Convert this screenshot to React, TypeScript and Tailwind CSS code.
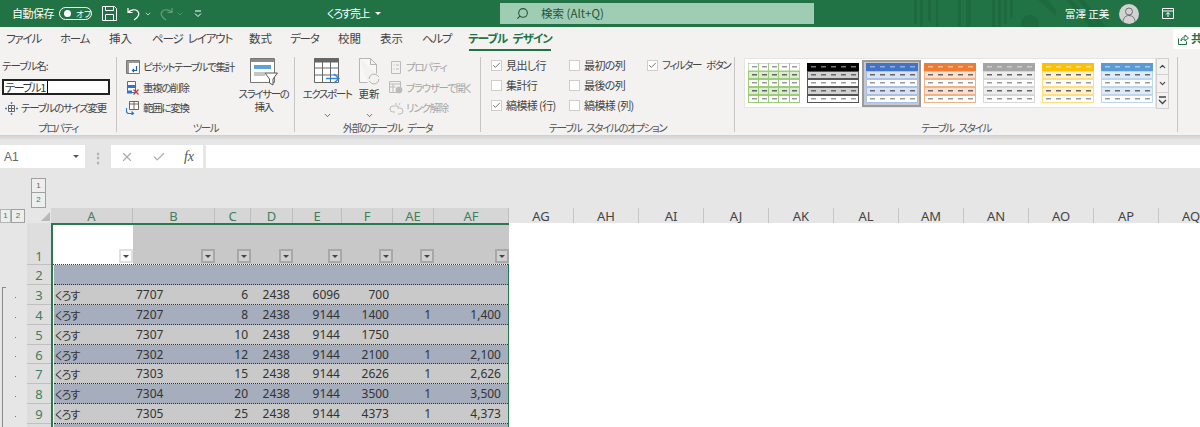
import { ChevronDown, ChevronUp, Search, Check, X } from "lucide-react";

const jp = "font-['Noto_Sans_CJK_JP','Noto_Sans',sans-serif] [font-feature-settings:'palt']";

const columns = [
  ["A", 82], ["B", 82], ["C", 36], ["D", 42], ["E", 49], ["F", 51], ["AE", 41], ["AF", 75],
] as const;

const moreColumns = ["AG", "AH", "AI", "AJ", "AK", "AL", "AM", "AN", "AO", "AP", "AQ"];

const rows = [
  { n: 3, h: "h-[20px]", b: "7707", c: "6", d: "2438", e: "6096", f: "700", ae: "", af: "" },
  { n: 4, h: "h-[20px]", b: "7207", c: "8", d: "2438", e: "9144", f: "1400", ae: "1", af: "1,400" },
  { n: 5, h: "h-[20px]", b: "7307", c: "10", d: "2438", e: "9144", f: "1750", ae: "", af: "" },
  { n: 6, h: "h-[19px]", b: "7302", c: "12", d: "2438", e: "9144", f: "2100", ae: "1", af: "2,100" },
  { n: 7, h: "h-[20px]", b: "7303", c: "15", d: "2438", e: "9144", f: "2626", ae: "1", af: "2,626" },
  { n: 8, h: "h-[20px]", b: "7304", c: "20", d: "2438", e: "9144", f: "3500", ae: "1", af: "3,500" },
  { n: 9, h: "h-[20px]", b: "7305", c: "25", d: "2438", e: "9144", f: "4373", ae: "1", af: "4,373" },
];

function Swatch({ head, line, band, dash = "#9a9a9a", headDash = "#ffffff99", cells }: { head: string; line: string; band: string; dash?: string; headDash?: string; cells?: boolean }) {
  const xs = [4, 14, 24, 34, 44];
  return (
    <svg width="52" height="40" viewBox="0 0 52 40" className="shrink-0">
      <rect x="0" y="0" width="52" height="8" fill={head} stroke={cells ? line : "none"} />
      {[8, 16, 24, 32].map((y, i) => (
        <rect key={y} x="0.5" y={y + 0.5} width="51" height="7" fill={i % 2 === 0 ? band : "#ffffff"} stroke={line} />
      ))}
      {cells && [10.5, 20.5, 30.5, 41.5].map((x) => <path key={x} d={`M${x} 0v40`} stroke={line} />)}
      {xs.map((x) => (
        <g key={x}>
          <rect x={x} y="3" width="5" height="1.5" fill={headDash} />
          {[11, 19, 27, 35].map((y, i) => (
            <rect key={y} x={x} y={y} width="5" height="1.5" fill={i % 2 === 0 ? "#666666" : dash} />
          ))}
        </g>
      ))}
    </svg>
  );
}

function Group({ label, width, children }: { label: string; width: string; children: React.ReactNode }) {
  return (
    <div className={`${width} flex h-full shrink-0 flex-col border-r border-[#c8c6c4]`}>
      <div className="flex-1">{children}</div>
      <div className="-mb-[3px] text-center text-[10.5px] leading-[14px] tracking-[-1.4px] text-[#555] [word-spacing:4px]">{label}</div>
    </div>
  );
}

function Option({ label, checked, narrow }: { label: string; checked?: boolean; narrow?: boolean }) {
  return (
    <div className="flex h-[20px] items-center gap-[4px] whitespace-nowrap">
      <span className="flex size-[11px] shrink-0 items-center justify-center border border-[#d0cecc] bg-white">
        {checked && <Check size={9} strokeWidth={2} className="text-[#444]" />}
      </span>
      <span className={narrow ? "text-[10.5px] tracking-[-1.4px] [word-spacing:4px]" : "tracking-[-0.6px]"}>{label}</span>
    </div>
  );
}

function FilterButton({ white }: { white?: boolean }) {
  return (
    <span className={`flex size-[14px] items-center justify-center border-2 ${white ? "border-[#e0e0e0] bg-white" : "border-[#a8a8a8] bg-[#d0d0d0]"}`}>
      <span className="h-0 w-0 border-x-[3px] border-t-[3px] border-x-transparent border-t-[#444]" />
    </span>
  );
}

function SmallLine({ icon, label, disabled }: { icon: React.ReactNode; label: string; disabled?: boolean }) {
  return (
    <div className={`flex h-[20.5px] items-center gap-[2px] whitespace-nowrap text-[10.5px] tracking-[-1.3px] ${disabled ? "text-[#a6a6a6]" : ""}`}>
      <span className="flex w-[16px] justify-center">{icon}</span>
      <span>{label}</span>
    </div>
  );
}

export default function App() {
  return (
    <div className={`${jp} h-[427px] w-[1200px] overflow-hidden bg-white text-[#444]`}>
      {/* title bar */}
      <div className="relative flex h-[27px] items-center bg-[#217346] text-[11px] text-white">
        <svg className="absolute left-[912px] top-0" width="200" height="27" viewBox="0 0 200 27">
          <g fill="#1d6a3f">
            <rect x="2" y="0" width="3" height="24" />
            <rect x="8" y="0" width="3" height="27" />
            <rect x="16" y="0" width="3" height="22" />
            <rect x="24" y="0" width="2" height="27" />
            <rect x="46" y="0" width="3" height="27" />
            <rect x="54" y="0" width="5" height="27" />
            <rect x="80" y="0" width="3" height="27" />
            <rect x="86" y="0" width="3" height="27" />
            <rect x="92" y="0" width="3" height="24" />
            <rect x="98" y="0" width="3" height="18" />
            <path d="M126 0h10l8 10v6zM154 0h6l26 27h-8zM166 0h6l22 27h-8z" />
            <circle cx="118" cy="24" r="9" />
          </g>
        </svg>
        <span className="ml-[12px] w-[46px] shrink-0 whitespace-nowrap tracking-[-0.5px]">自動保存</span>
        <span className="ml-[1px] flex h-[13px] w-[33px] shrink-0 items-center rounded-full border border-white pl-[4px] text-[8.5px]">
          <span className="size-[7px] shrink-0 rounded-full bg-white" />
          <span className="ml-[5px] whitespace-nowrap leading-none">オフ</span>
        </span>
        <svg className="ml-[10px] shrink-0" width="15" height="15" viewBox="0 0 15 15" fill="none" stroke="#fff">
          <path d="M.5.5h12l2 2v12H.5zM3.500.5v4h8v-4M3.500 14.5v-6h8v6" />
        </svg>
        <svg className="ml-[10px] shrink-0" width="14" height="14" viewBox="0 0 14 14" fill="none" stroke="#fff" strokeWidth="1.2">
          <path d="M1 1v4.500h4.500M1.500 5C4 2.500 8 2 10.500 4c2.500 2.500 1.500 6-3.500 9" />
        </svg>
        <ChevronDown size={8} className="ml-[3px] shrink-0" />
        <svg className="ml-[7px] shrink-0 opacity-30" width="14" height="14" viewBox="0 0 14 14" fill="none" stroke="#fff" strokeWidth="1.2">
          <path d="M13 1v4.500H8.500M12.500 5C10 2.500 6 2 3.500 4c-2.500 2.500-1.500 6 3.500 9" />
        </svg>
        <ChevronDown size={8} className="ml-[3px] shrink-0 opacity-30" />
        <svg className="ml-[10px] shrink-0" width="8" height="8" viewBox="0 0 8 8" fill="none" stroke="#fff">
          <path d="M1 1h6M1 3.500l3 3 3-3" />
        </svg>
        <span className="ml-[125px] w-[42px] shrink-0 whitespace-nowrap tracking-[-1.4px]">くろす売上</span>
        <span className="ml-[6px] h-0 w-0 shrink-0 border-x-[3px] border-t-[3px] border-x-transparent border-t-white" />
        <div className="relative ml-[119px] flex h-[21px] w-[314px] shrink-0 items-center bg-[#9fcdb3] text-[#26543a]">
          <Search size={13} className="ml-[16px] -scale-x-100" />
          <span className="ml-[12px] text-[11.5px]">検索 (Alt+Q)</span>
        </div>
        <span className="relative ml-[251px] w-[44px] shrink-0 whitespace-nowrap text-[10.5px]">富澤 正美</span>
        <span className="relative ml-[10px] flex size-[20px] shrink-0 items-center justify-center overflow-hidden rounded-full bg-[#d2d2d2]">
          <svg width="16" height="16" viewBox="0 0 16 16" fill="none" stroke="#6e6e6e">
            <circle cx="8" cy="5.5" r="3.5" />
            <path d="M2 16c0-4 2.500-6.500 6-6.500s6 2.500 6 6.500" />
          </svg>
        </span>
        <svg className="relative ml-[23px] shrink-0" width="12" height="11" viewBox="0 0 12 11" fill="none" stroke="#fff">
          <path d="M.5.5h11v10H.5zM.5 3h11" />
          <path d="M6 9V4.500M4 6.500l2-2 2 2" />
        </svg>
      </div>

      {/* tabs */}
      <div className="flex h-[24px] items-center bg-[#f3f2f1] pl-[6px] text-[11.5px] tracking-[-1.2px] text-[#444] [word-spacing:4px]">
        <span className="w-[54px] shrink-0 whitespace-nowrap">ファイル</span>
        <span className="w-[49px] shrink-0 whitespace-nowrap">ホーム</span>
        <span className="w-[43px] shrink-0 whitespace-nowrap tracking-normal">挿入</span>
        <span className="w-[97px] shrink-0 whitespace-nowrap">ページ レイアウト</span>
        <span className="w-[41px] shrink-0 whitespace-nowrap tracking-normal">数式</span>
        <span className="w-[48px] shrink-0 whitespace-nowrap">データ</span>
        <span className="w-[42px] shrink-0 whitespace-nowrap tracking-normal">校閲</span>
        <span className="w-[42px] shrink-0 whitespace-nowrap tracking-normal">表示</span>
        <span className="w-[47px] shrink-0 whitespace-nowrap">ヘルプ</span>
        <span className="flex h-full w-[82px] shrink-0 flex-col items-center justify-center whitespace-nowrap border-b-[2px] border-[#217346] pt-[2px] font-bold tracking-[-1px] text-[#217346]">テーブル デザイン</span>
        <span className="ml-auto flex h-[20px] w-[27px] items-center gap-[2px] overflow-hidden rounded-l-[2px] bg-white pl-[5px] font-bold text-[#217346]">
          <svg width="11" height="11" viewBox="0 0 11 11" fill="none" stroke="#217346" className="shrink-0">
            <path d="M.5 4.500v6h8v-3M3 7c0-3 2-4 4-4V1l3.500 3L7 7V5C5 5 4 5.500 3 7z" />
          </svg>
          共
        </span>
      </div>

      {/* ribbon */}
      <div className="flex h-[84px] items-stretch bg-[#f3f2f1] pb-[3px] pt-[6px] text-[11px] leading-none text-[#444]">
        <Group label="プロパティ" width="w-[117px]">
          <div className="pl-[2px] pt-[2px] text-[10.5px] leading-[14px] tracking-[-1px]">テーブル名:</div>
          <div className="ml-[2px] mt-[6px] flex h-[16px] w-[108px] items-center border-2 border-[#222] bg-white pl-[1px] text-[11px] tracking-[-1.2px] text-[#333]">テーブル1<span className="ml-[2px] h-[13px] w-px bg-black" /></div>
          <div className="mt-[3px] pl-[3px]">
            <SmallLine
              label="テーブルのサイズ変更"
              icon={
                <svg width="13" height="13" viewBox="0 0 13 13" fill="none" stroke="#666">
                  <path d="M3.500 3.500h6v6h-6zM6.500 3.500v6M3.500 6.500h6" />
                  <path d="M6.500 0v2M6.500 11v2M0 6.500h2M11 6.500h2" stroke="#2b88d8" strokeWidth="1.4" />
                </svg>
              }
            />
          </div>
        </Group>

        <Group label="ツール" width="w-[178px]">
          <div className="flex pl-[8px]">
            <div className="w-[113px] shrink-0">
              <SmallLine
                label="ピボットテーブルで集計"
                icon={
                  <svg width="14" height="14" viewBox="0 0 14 14" fill="none" stroke="#777">
                    <path d="M.5.5h13v13H.5z" fill="#fff" />
                    <path d="M1 1h12v2H1zM1 1h2v12H1z" fill="#999" stroke="none" />
                    <path d="M10.500 6v4.500H6.500M8 9l-1.500 1.500L8 12" stroke="#1f5fa8" strokeWidth="1.2" />
                  </svg>
                }
              />
              <SmallLine
                label="重複の削除"
                icon={
                  <svg width="14" height="14" viewBox="0 0 14 14">
                    <path d="M1.500.5h8v11h-8z" fill="#fff" stroke="#2b78c5" />
                    <rect x="1" y="4" width="9" height="3" fill="#2b78c5" />
                    <rect x="1" y="9.5" width="5" height="3" fill="#2b78c5" />
                    <path d="M7.500 8.500l5 5M12.500 8.500l-5 5" stroke="#d13438" strokeWidth="1.3" />
                  </svg>
                }
              />
              <SmallLine
                label="範囲に変換"
                icon={
                  <svg width="14" height="14" viewBox="0 0 14 14" fill="none" stroke="#666">
                    <path d="M3.500.5h9v8h-9z" fill="#fff" />
                    <path d="M3.500 3h9M8 .5v8" />
                    <path d="M7 12.500H3c-1.500 0-2.500-1-2.500-2.500V7M5.500 10.500l2 2-2 1.500" stroke="#2b78c5" strokeWidth="1.2" />
                  </svg>
                }
              />
            </div>
            <div className="flex w-[51px] shrink-0 flex-col items-center pt-[1px] text-center text-[10.5px] leading-[13px] tracking-[-1.4px]">
              <svg width="28" height="28" viewBox="0 0 28 28" fill="none">
                <path d="M.5.5h24v24H.5z" fill="#fff" stroke="#777" />
                <rect x="1" y="1" width="23" height="3" fill="#8a8a8a" />
                <rect x="4" y="7" width="17" height="4" fill="#5ba3dc" />
                <rect x="4" y="14" width="11" height="4" fill="#c8c6c4" />
                <path d="M15 15h12.500l-4.500 6v6l-3.500-2v-4z" fill="#fff" stroke="#555" />
              </svg>
              <div className="mt-[1px] whitespace-nowrap">スライサーの</div>
              <div>挿入</div>
            </div>
          </div>
        </Group>

        <Group label="外部のテーブル データ" width="w-[186px]">
          <div className="flex">
            <div className="ml-[7px] flex w-[50px] shrink-0 flex-col items-center pt-[1px] text-[10.5px] leading-[13px] tracking-[-1.4px]">
              <svg width="26" height="28" viewBox="0 0 26 28" fill="none" stroke="#666">
                <path d="M.5.5h24v24H.5z" fill="#fff" />
                <rect x="1" y="1" width="23" height="3" fill="#666" />
                <path d="M.5 10h24M.5 17h24M8.500 4v21M16.500 4v21" />
                <path d="M12 20.500h13M20 16l5 4.500-5 4.500" stroke="#2b88d8" strokeWidth="1.4" />
              </svg>
              <div className="mt-[1px] whitespace-nowrap">エクスポート</div>
              <ChevronDown size={9} className="mt-[11px]" />
            </div>
            <div className="flex w-[34px] shrink-0 flex-col items-center pt-[1px] text-[10.5px] leading-[13px]">
              <svg width="24" height="28" viewBox="0 0 24 28" fill="none" stroke="#b5b5b5">
                <path d="M2.500.5h11l6 6v9M2.500.5v24h8M13.500.5v6h6" fill="#f7f7f7" />
                <path d="M12 21a5 5 0 0 1 8.500-3.500l1.500 1.500M22 21a5 5 0 0 1-8.500 3.500L12 23" />
              </svg>
              <div className="mt-[1px]">更新</div>
              <ChevronDown size={9} className="mt-[11px]" />
            </div>
            <div className="ml-[2px]">
              <SmallLine disabled label="プロパティ" icon={<svg width="10" height="13" viewBox="0 0 10 13" fill="none" stroke="#bbb"><path d="M.5.5h9v12h-9zM2.500 4h1M5 4h3M2.500 8h1M5 8h3" /></svg>} />
              <SmallLine disabled label="ブラウザーで開く" icon={<svg width="14" height="13" viewBox="0 0 14 13" fill="none" stroke="#bbb"><path d="M.5.5h11v11H.5zM.5 3h11M.5 6h6M4 3v8" /><circle cx="10" cy="9" r="3" fill="#bbb" /></svg>} />
              <SmallLine disabled label="リンク解除" icon={<svg width="15" height="13" viewBox="0 0 15 13" fill="none" stroke="#bbb"><path d="M6 10H4a3 3 0 0 1 0-6h4a3 3 0 0 1 2 1M8 6h3a3 3 0 0 1 0 6H9M7 1v2M11 1l-1 2" /></svg>} />
            </div>
          </div>
        </Group>

        <Group label="テーブル スタイルのオプション" width="w-[254px]">
          <div className="-mt-[2px] flex pl-[10px]">
            <div className="w-[78px] shrink-0">
              <Option label="見出し行" checked />
              <Option label="集計行" />
              <Option label="縞模様 (行)" checked />
            </div>
            <div className="w-[78px] shrink-0">
              <Option label="最初の列" />
              <Option label="最後の列" />
              <Option label="縞模様 (列)" />
            </div>
            <Option label="フィルター ボタン" checked narrow />
          </div>
        </Group>

        <Group label="テーブル スタイル" width="w-[443px]">
          <div className="flex pl-[9px] pt-[1px]">
            <div className="flex h-[50px] w-[412px] items-center gap-[7px] border border-[#e4e4e4] bg-white pl-[3px]">
              <Swatch head="#ffffff" line="#9ccb7c" band="#dcedcf" dash="#9a9a9a" headDash="#9a9a9a" cells />
              <Swatch head="#000000" line="#555555" band="#d0d0d0" headDash="#777777" />
              <div className="mx-[-4px] flex h-[47px] w-[59px] items-center justify-center border-2 border-[#9a9a9a] bg-[#c8c8c8]">
                <Swatch head="#4472c4" line="#a9c0e8" band="#d9e2f3" headDash="#8faee0" />
              </div>
              <Swatch head="#ed7d31" line="#f4b183" band="#fbe0d0" headDash="#f7b98e" />
              <Swatch head="#a5a5a5" line="#d6d6d6" band="#ededed" headDash="#cccccc" />
              <Swatch head="#ffc000" line="#ffdd80" band="#fff2cc" headDash="#ffe08a" />
              <Swatch head="#5b9bd5" line="#bcd6ee" band="#deebf7" headDash="#a8cbea" />
            </div>
            <div className="flex w-[13px] flex-col">
              <span className="flex h-[17px] items-center justify-center border border-[#d0d0d0]"><ChevronUp size={9} strokeWidth={3} /></span>
              <span className="flex h-[17px] items-center justify-center border-x border-[#d0d0d0]"><ChevronDown size={9} strokeWidth={3} /></span>
              <span className="flex h-[17px] items-center justify-center border border-[#d0d0d0]"><svg width="9" height="9" viewBox="0 0 9 9" fill="none" stroke="#444" strokeWidth="1.3"><path d="M1 1h7M1 4l3.500 3.500L8 4" /></svg></span>
            </div>
          </div>
        </Group>
      </div>

      {/* ribbon shadow */}
      <div className="h-[5px] bg-gradient-to-b from-[#cfcfcf] to-[#e6e6e6]" />

      {/* formula bar */}
      <div className="flex h-[29px] items-start bg-[#e6e6e6] pt-[5px]">
        <div className="flex h-[23px] w-[85px] items-center justify-between bg-white pl-[4px] pr-[6px] font-['Liberation_Sans',sans-serif] text-[12px] text-[#666]">
          A1
          <span className="h-0 w-0 border-x-[3px] border-t-[3px] border-x-transparent border-t-[#555]" />
        </div>
        <div className="flex h-[23px] w-[26px] items-center justify-center">
          <span className="text-[12px] font-bold leading-none text-[#aaa]">⋮</span>
        </div>
        <div className="flex h-[23px] w-[92px] items-center justify-between bg-white px-[9px] text-[#aaa]">
          <X size={14} />
          <Check size={14} />
          <span className="font-['Liberation_Serif',serif] text-[14px] italic text-[#555]">fx</span>
        </div>
        <div className="ml-[3px] h-[23px] flex-1 bg-white" />
      </div>

      {/* outline level row */}
      <div className="flex h-[39px] bg-[#e6e6e6] pl-[31px] pt-[9px]">
        <div className="flex w-[15px] flex-col font-['Liberation_Sans',sans-serif] text-[8px] text-[#666]">
          <span className="flex h-[15px] items-center justify-center border border-[#a0a0a0] bg-[#eeeeee]">1</span>
          <span className="flex h-[15px] items-center justify-center border border-t-0 border-[#a0a0a0] bg-[#eeeeee]">2</span>
        </div>
      </div>

      {/* sheet */}
      <div className="flex font-['Noto_Sans',sans-serif] text-[12px]">
        {/* outline gutter */}
        <div className="flex w-[27px] shrink-0 flex-col bg-[#e6e6e6]">
          <div className="flex h-[15px] pt-px font-['Liberation_Sans',sans-serif] text-[8px] text-[#666]">
            <span className="flex h-[14px] w-[11px] items-center justify-center border border-[#b5b5b5] bg-[#eee]">1</span>
            <span className="flex h-[14px] w-[14px] items-center justify-center border border-[#a0a0a0] bg-[#eee]">2</span>
          </div>
          <div className="h-[64px]" />
          <div className="relative flex-1">
            <div className="absolute left-[2px] top-0 h-full w-[4px] border-l border-t border-[#8a8a8a]" />
            <div className="flex flex-col">
              {rows.map((r) => (
                <div key={r.n} className={`${r.h} flex items-center pl-[15px]`}>
                  <span className="size-[1px] bg-[#777]" />
                </div>
              ))}
            </div>
          </div>
        </div>

        {/* row headers */}
        <div className="flex w-[24px] shrink-0 flex-col bg-[#dedede] text-[13px] text-[#3f7f5f]">
          <div className="relative h-[15px] bg-[#e6e6e6]">
            <span className="absolute bottom-[2px] right-[1px] h-0 w-0 border-b-[9px] border-l-[9px] border-b-[#b8b8b8] border-l-transparent" />
          </div>
          <div className="flex h-[42px] items-end justify-center border-b border-[#c0c0c0] leading-[15px]">1</div>
          <div className="flex h-[20px] items-center justify-center border-b border-[#c0c0c0] pt-[3px]">2</div>
          {rows.map((r) => (
            <div key={r.n} className={`${r.h} flex items-center justify-center border-b border-[#c0c0c0] pt-[3px]`}>{r.n}</div>
          ))}
          <div className="h-[5px]" />
        </div>

        <div className="flex flex-col">
          {/* column headers */}
          <div className="flex h-[15px] text-[13px] leading-[17px]">
            {columns.map(([name, w]) => (
              <div key={name} style={{ width: w }} className="shrink-0 border-r border-[#bdbdbd] bg-[#d6d6d6] text-center text-[#3f7f5f]">{name}</div>
            ))}
            {moreColumns.map((name) => (
              <div key={name} className="w-[65px] shrink-0 border-r border-[#c6c6c6] bg-[#e6e6e6] text-center text-[#444]">{name}</div>
            ))}
          </div>

          {/* table */}
          <div className="w-[458px] border-x-2 border-t-2 border-[#2a7a50] border-r-[1px] bg-white text-[#333]">
            <div className="grid h-[40px] grid-cols-[80px_82px_36px_42px_49px_51px_41px_75px] items-end border-b border-dotted border-[#333]">
              {columns.map(([name], i) => (
                <div key={name} className={`flex h-full items-end justify-end pb-[1px] ${i === 0 ? "bg-white" : "bg-[#c8c8c8]"}`}>
                  <FilterButton white={i === 0} />
                </div>
              ))}
            </div>
            <div className="ml-[1px] h-[20px] border-b border-dotted border-[#333] bg-[#a6adbc]" />
            {rows.map((r, i) => (
              <div key={r.n} className={`${r.h} ml-[1px] grid grid-cols-[79px_82px_36px_42px_49px_51px_41px_75px] items-center border-b border-dotted border-[#333] pt-[1px] ${i % 2 === 0 ? "bg-[#c9c9c9]" : "bg-[#a6adbc]"}`}>
                <span className={`pl-[1px] text-[11px] tracking-[-1px] ${jp}`}>くろす</span>
                <span className="pl-[3px]">{r.b}</span>
                <span className="pr-[3px] text-right">{r.c}</span>
                <span className="pr-[3px] text-right">{r.d}</span>
                <span className="pr-[2px] text-right">{r.e}</span>
                <span className="pr-[4px] text-right">{r.f}</span>
                <span className="pr-[3px] text-right">{r.ae}</span>
                <span className="pr-[8px] text-right">{r.af}</span>
              </div>
            ))}
            <div className="ml-[1px] h-[5px] bg-[#a6adbc]" />
          </div>
        </div>
      </div>
    </div>
  );
}
